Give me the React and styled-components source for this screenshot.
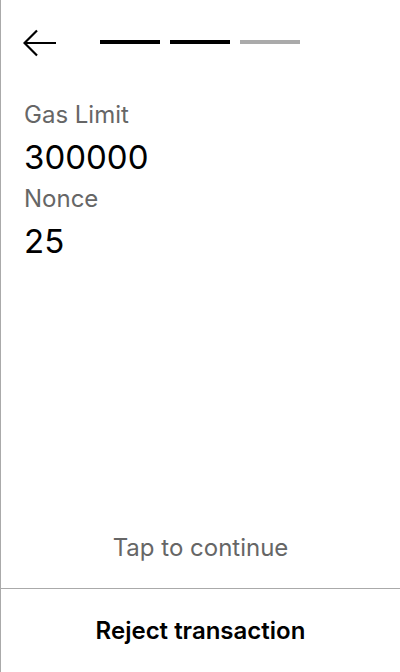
import React from "react";
import styled, { createGlobalStyle } from "styled-components";

const Global = createGlobalStyle`
  html, body { margin: 0; padding: 0; background: #fff; }
  body { font-family: Inter, "Noto Sans", sans-serif; }
`;

const Screen = styled.div`
  width: 400px;
  height: 672px;
  box-sizing: border-box;
  border-left: 1px solid #aaaaaa;
  display: flex;
  flex-direction: column;
  background: #fff;
`;

const Header = styled.div`
  display: flex;
  align-items: center;
  gap: 43px;
  padding: 29px 0 0 22px;
  height: 28px;
`;

const BackButton = styled.button`
  border: none;
  background: none;
  padding: 0;
  width: 34px;
  height: 28px;
  display: flex;
  align-items: center;
  cursor: pointer;
`;

const Steps = styled.div`
  display: flex;
  gap: 10px;
  margin-bottom: 2px;
`;

const Step = styled.div`
  width: 60px;
  height: 4px;
  background: ${(p) => (p.$done ? "#000" : "#aaaaaa")};
`;

const Body = styled.div`
  flex: 1;
  padding: 43px 23px 0;
  display: flex;
  flex-direction: column;
  gap: 7px;
`;

const Label = styled.div`
  font-size: 24px;
  line-height: 30px;
  color: #666;
`;

const Value = styled.div`
  font-size: 33px;
  line-height: 40px;
  color: #000;
`;

const Hint = styled.div`
  text-align: center;
  font-size: 24px;
  line-height: 29px;
  color: #666;
  padding-bottom: 26px;
`;

const Footer = styled.button`
  border: none;
  border-top: 1px solid #aaaaaa;
  background: none;
  height: 84px;
  font-family: inherit;
  font-size: 24px;
  font-weight: 600;
  color: #000;
  cursor: pointer;
`;

export default function App() {
  return (
    <>
      <Global />
      <Screen>
        <Header>
          <BackButton aria-label="Back">
            <svg width="34" height="28" viewBox="0 0 34 28" fill="none">
              <path d="M33 14H1.5M14 1.5L1.5 14L14 26.5" stroke="#000" strokeWidth="2.2" />
            </svg>
          </BackButton>
          <Steps>
            <Step $done />
            <Step $done />
            <Step />
          </Steps>
        </Header>
        <Body>
          <Label>Gas Limit</Label>
          <Value>300000</Value>
          <Label>Nonce</Label>
          <Value>25</Value>
        </Body>
        <Hint>Tap to continue</Hint>
        <Footer>Reject transaction</Footer>
      </Screen>
    </>
  );
}
